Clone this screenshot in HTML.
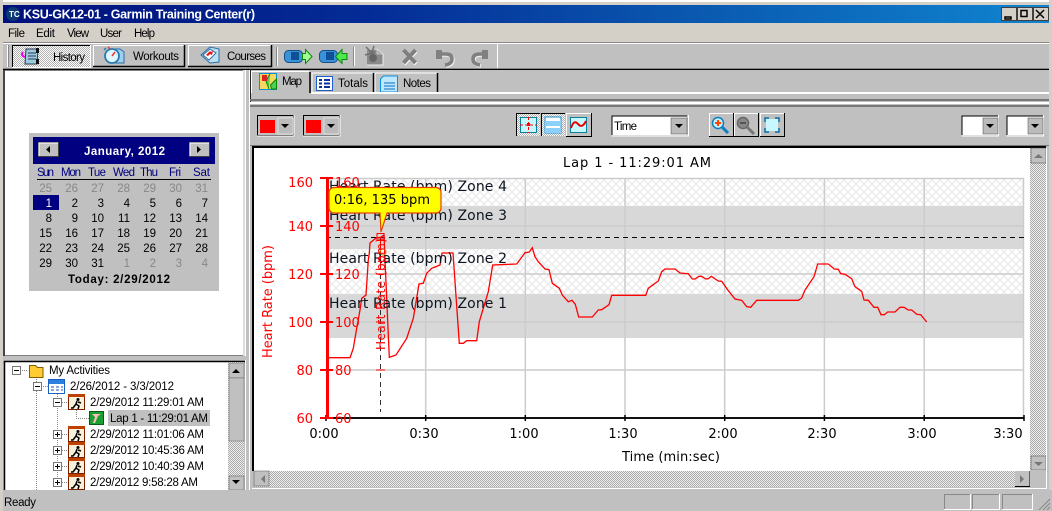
<!DOCTYPE html>
<html><head><meta charset="utf-8"><style>
html,body{margin:0;padding:0;background:#c0c0c0;width:1052px;height:511px;overflow:hidden}
svg{display:block}
text{font-family:"Liberation Sans",sans-serif;font-size:11.5px;fill:#000}
.g{fill:#888}.n{fill:#000080}
.c{font-family:"DejaVu Sans","Liberation Sans",sans-serif;font-size:13px}
.z{font-family:"DejaVu Sans","Liberation Sans",sans-serif;font-size:14px;fill:#0c1420}
.r{font-family:"DejaVu Sans","Liberation Sans",sans-serif;font-size:13px;fill:#f00}
</style></head><body>
<svg width="1052" height="511" viewBox="0 0 1052 511" xmlns="http://www.w3.org/2000/svg">
<defs>
<linearGradient id="t"><stop offset="0" stop-color="#00107c"/><stop offset=".35" stop-color="#042c96"/><stop offset=".67" stop-color="#0a5ab0"/><stop offset="1" stop-color="#1084d0"/></linearGradient>
<pattern id="h" width="8" height="8" patternUnits="userSpaceOnUse"><rect width="8" height="8" fill="#fff"/><path d="M0 0L8 8M8 0L0 8" stroke="#e8e8e8" stroke-width="1"/></pattern>
<pattern id="d" width="2" height="2" patternUnits="userSpaceOnUse"><rect width="2" height="2" fill="#fff"/><rect width="1" height="1" fill="#b0b0b0"/><rect x="1" y="1" width="1" height="1" fill="#b0b0b0"/></pattern>
<pattern id="k" width="2" height="2" patternUnits="userSpaceOnUse"><rect width="2" height="2" fill="#eee"/><rect width="1" height="1" fill="#aaa"/><rect x="1" y="1" width="1" height="1" fill="#aaa"/></pattern>
</defs>
<rect width="1052" height="511" fill="#c0c0c0"/>
<rect width="1052" height="2" fill="#fff"/>
<rect y="2" width="1052" height="3" fill="#d4d0c8"/>
<rect x="0" width="3" height="511" fill="#d4d0c8"/><rect x="1049" width="3" height="511" fill="#d4d0c8"/>
<rect x="3" y="5" width="1046" height="18" fill="url(#t)"/>
<circle cx="13" cy="14" r="7" fill="#0b3a74"/><text x="9" y="17" style="font-size:8px;font-weight:bold;fill:#fff">TC</text>
<text x="23" y="18.500" textLength="232" style="font-size:12.5px;font-weight:bold;fill:#fff">KSU-GK12-01 - Garmin Training Center(r)</text>
<g fill="#d4d0c8" stroke="#404040"><rect x="1001.500" y="7.500" width="15" height="13"/><rect x="1017.500" y="7.500" width="15" height="13"/><rect x="1033.500" y="7.500" width="15" height="13"/></g>
<path d="M1005 17h6v2h-6zM1021 10.500h6v6h-6zM1036 10l8 8M1044 10l-8 8" fill="none" stroke="#000" stroke-width="1.500"/>
<rect x="3" y="23" width="1046" height="19" fill="#d4d0c8"/>
<text x="8" y="37" textLength="17">File</text><text x="36" y="37" textLength="19">Edit</text><text x="67" y="37" textLength="22">View</text><text x="100" y="37" textLength="22">User</text><text x="134" y="37" textLength="21">Help</text>
<rect x="3" y="42" width="1046" height="1" fill="#888"/><rect x="3" y="43" width="1046" height="1" fill="#fff"/>
<rect x="7" y="45" width="1" height="22" fill="#fff"/><rect x="8" y="45" width="1" height="22" fill="#888"/>
<rect x="12" y="45" width="78" height="22" fill="url(#d)"/><path d="M12.500 67V45.500H90" fill="none" stroke="#000"/><path d="M90.500 45V67.500H12" fill="none" stroke="#fff"/>
<path d="M23 52q-3 4 3 5" fill="none" stroke="#e0e" stroke-width="2"/><path d="M26 49h12l-1 15H25z" fill="#9cd" stroke="#335"/><path d="M28 53h8M28 56h8M28 59h8" stroke="#335"/><path d="M36 48h3v5h-3zM36 59h3v5h-3z" fill="#111"/>
<text x="53" y="61" textLength="32">History</text>
<g fill="#c0c0c0"><rect x="93" y="45" width="91" height="22"/><rect x="188" y="45" width="83" height="22"/></g>
<path d="M93.500 67V45.500H184M188.500 67V45.500H271" fill="none" stroke="#fff"/><path d="M184.500 45V66.500H93M271.500 45V66.500H188" fill="none" stroke="#000" stroke-width="1.500"/>
<path d="M110 49h10l4 3v11h-14z" fill="#9fd0f0" stroke="#2a6ea8"/><circle cx="112" cy="56" r="7" fill="#dff6ff" stroke="#2a7ab0" stroke-width="1.800"/><path d="M108 47l2 2M112 56l3-4" stroke="#e33" stroke-width="1.500"/><path d="M106 48l-2 2" stroke="#2a7ab0" stroke-width="1.500"/>
<text x="133" y="60" textLength="46">Workouts</text>
<path d="M201 55l9-8 9 2v13l-9 1z" fill="#bfe0f4" stroke="#2a6ea8"/><path d="M203 55l7-6 6 4-7 7z" fill="#fff" stroke="#2a6ea8"/><path d="M206 55l4-4 1 1 2-1-1 4-2-1-2 2z" fill="#e11"/>
<text x="227" y="60" textLength="39">Courses</text>
<rect x="276" y="47" width="1" height="19" fill="#888"/><rect x="277" y="47" width="1" height="19" fill="#fff"/>
<rect x="284.500" y="50.500" width="18" height="12" rx="4" fill="#3a92d8" stroke="#134f86"/><rect x="291" y="52" width="8" height="8" fill="#0e4f96"/><path d="M302.500 53.500h3v-4l6.500 7-6.500 7v-4h-3z" fill="#a0ff90" stroke="#0a8a0a"/>
<rect x="319.500" y="50.500" width="18" height="12" rx="4" fill="#3a92d8" stroke="#134f86"/><rect x="326" y="52" width="8" height="8" fill="#0e4f96"/><path d="M347 53.500h-5v-4l-6.500 7 6.500 7v-4h5z" fill="#50e850" stroke="#0a8a0a"/>
<rect x="353" y="47" width="1" height="19" fill="#888"/><rect x="354" y="47" width="1" height="19" fill="#fff"/>
<path d="M367 50h10l6 4v11h-16z" fill="#8a8a8a"/><path d="M377 49l6 5h-6z" fill="#aaa" stroke="#eee" stroke-width=".6"/><path d="M366 47l8 8M374 46l-3 9M365 55l10-3" stroke="#707070" stroke-width="1.500"/><circle cx="373" cy="58" r="4" fill="#666"/><path d="M367 65h16V54" fill="none" stroke="#eee"/>
<path d="M404 51l12 13M416 51l-12 13" stroke="#fff" stroke-width="4"/><path d="M403.500 50l12 13M415.500 50l-12 13" stroke="#808080" stroke-width="4"/>
<g fill="none"><path d="M438 55h9q6 0 6 5t-7 6" stroke="#eee" stroke-width="3.500"/><path d="M437 54h9q6 0 6 5t-7 6" stroke="#808080" stroke-width="3.500"/><path d="M488 55h-7q-7 0-7 5t7 6" stroke="#eee" stroke-width="3.500"/><path d="M487 54h-7q-7 0-7 5t7 6" stroke="#808080" stroke-width="3.500"/></g>
<path d="M436 50h6v9h-6zM482 50h6v9h-6z" fill="#808080"/>
<rect x="497" y="44" width="1" height="24" fill="#fff"/>
<rect x="3" y="68" width="1046" height="1" fill="#888"/><rect x="3" y="69" width="1046" height="1" fill="#000"/>

<!-- left calendar pane -->
<rect x="4" y="70" width="241" height="286" fill="#fff" stroke="#000"/>
<rect x="3" y="70" width="2" height="286" fill="#444"/>
<rect x="243" y="70" width="2" height="286" fill="#ddd"/>
<rect x="245" y="70" width="1" height="420" fill="#fff"/><rect x="246" y="70" width="3" height="420" fill="#c0c0c0"/><rect x="249" y="70" width="1" height="420" fill="#fff"/>
<rect x="29" y="133" width="190" height="158" fill="#c0c0c0"/>
<rect x="33" y="137" width="182" height="27" fill="#000080"/>
<g fill="#c0c0c0" stroke="#404040"><rect x="38.500" y="142.500" width="20" height="14"/><rect x="189.500" y="142.500" width="20" height="14"/></g>
<path d="M39 156V143h19M190 156V143h19" fill="none" stroke="#fff"/>
<path d="M50 146v7l-4-3.500zM197 146v7l4-3.500z" fill="#000"/>
<text x="84" y="155" textLength="81" style="font-weight:bold;fill:#fff">January, 2012</text>
<g class="n"><text class="n" x="37" y="176" textLength="17">Sun</text><text class="n" x="61" y="176" textLength="20">Mon</text><text class="n" x="88" y="176" textLength="18">Tue</text><text class="n" x="113" y="176" textLength="22">Wed</text><text class="n" x="140" y="176" textLength="18">Thu</text><text class="n" x="169" y="176" textLength="12">Fri</text><text class="n" x="193" y="176" textLength="17">Sat</text></g>
<rect x="37" y="179" width="174" height="1" fill="#000"/>
<rect x="33" y="195" width="26" height="15" fill="#000080"/>
<g text-anchor="end">
<g><text class="g" x="52" y="192">25</text><text class="g" x="78" y="192">26</text><text class="g" x="104" y="192">27</text><text class="g" x="130" y="192">28</text><text class="g" x="156" y="192">29</text><text class="g" x="182" y="192">30</text><text class="g" x="208" y="192">31</text></g>
<g><text x="52" y="207" style="fill:#fff">1</text><text x="78" y="207">2</text><text x="104" y="207">3</text><text x="130" y="207">4</text><text x="156" y="207">5</text><text x="182" y="207">6</text><text x="208" y="207">7</text></g>
<g><text x="52" y="222">8</text><text x="78" y="222">9</text><text x="104" y="222">10</text><text x="130" y="222">11</text><text x="156" y="222">12</text><text x="182" y="222">13</text><text x="208" y="222">14</text></g>
<g><text x="52" y="237">15</text><text x="78" y="237">16</text><text x="104" y="237">17</text><text x="130" y="237">18</text><text x="156" y="237">19</text><text x="182" y="237">20</text><text x="208" y="237">21</text></g>
<g><text x="52" y="252">22</text><text x="78" y="252">23</text><text x="104" y="252">24</text><text x="130" y="252">25</text><text x="156" y="252">26</text><text x="182" y="252">27</text><text x="208" y="252">28</text></g>
<g><text x="52" y="267">29</text><text x="78" y="267">30</text><text x="104" y="267">31</text><text class="g" x="130" y="267">1</text><text class="g" x="156" y="267">2</text><text class="g" x="182" y="267">3</text><text class="g" x="208" y="267">4</text></g>
</g>
<text x="68" y="283" textLength="102" style="font-weight:bold">Today: 2/29/2012</text>

<!-- tree -->
<rect x="3" y="356" width="243" height="4" fill="#c0c0c0"/>
<rect x="4" y="361" width="225" height="129" fill="#fff"/>
<path d="M4.500 490V361.500H245" fill="none" stroke="#000" stroke-width="1.500"/>
<rect x="228" y="362" width="16" height="128" fill="url(#k)"/>
<rect x="229" y="363" width="15" height="15" fill="#c0c0c0" stroke="#555" stroke-width=".5"/>
<rect x="229" y="378" width="15" height="63" fill="#c0c0c0" stroke="#666" stroke-width=".5"/>
<rect x="229" y="476" width="15" height="14" fill="#c0c0c0" stroke="#555" stroke-width=".5"/>
<path d="M232 373h8l-4-4zM232 480h8l-4 4z" fill="#000"/>
<path d="M36.500 375v115M57.500 392v90M20 370.500h8M41 386.500h8M62 402.500h6M62 434.500h6M62 450.500h6M62 466.500h6M62 482.500h6M76.500 408v10.500h13" fill="none" stroke="#888" stroke-dasharray="1 1"/>
<g fill="#fff" stroke="#777"><rect x="12.500" y="366.500" width="8" height="8"/><rect x="33.500" y="382.500" width="8" height="8"/><rect x="53.500" y="398.500" width="8" height="8"/><rect x="53.500" y="430.500" width="8" height="8"/><rect x="53.500" y="446.500" width="8" height="8"/><rect x="53.500" y="462.500" width="8" height="8"/><rect x="53.500" y="478.500" width="8" height="8"/></g>
<path d="M14 370.500h5M35 386.500h5M55 402.500h5M55 434.500h5M57.500 432v5M55 450.500h5M57.500 448v5M55 466.500h5M57.500 464v5M55 482.500h5M57.500 480v5" stroke="#000" fill="none"/>
<path d="M29.500 365.500h6l2 2h5.500v10h-13.500z" fill="#fc3" stroke="#8a5a00"/>
<rect x="48.500" y="379.500" width="16" height="14" fill="#fff" stroke="#1a60c0"/><rect x="49" y="380" width="15" height="4" fill="#2a80e0"/><path d="M51 387h3M56 387h3M61 387h2M51 390h3M56 390h3M61 390h2" stroke="#1a50b0"/>
<g id="run"><rect x="68.500" y="394.500" width="16" height="15" fill="#f8f0d8" stroke="#7a2000"/><rect x="68" y="394" width="17" height="3" fill="#c04000"/><circle cx="78" cy="399.500" r="1.500" fill="#000"/><path d="M77 401l-1 3 3 2-1 3M76 404l-3 4h-2M78 402l3 1" fill="none" stroke="#000" stroke-width="1.500"/></g>
<use href="#run" y="32"/><use href="#run" y="48"/><use href="#run" y="64"/><use href="#run" y="80"/>
<rect x="89.500" y="411.500" width="14" height="13" fill="#1aa030" stroke="#0a5a14"/><path d="M92 414h9l-3 2-3 7h-2l2-6z" fill="#fbb"/>
<rect x="108" y="410" width="102" height="16" fill="#c0c0c0"/>
<text x="49" y="374" textLength="61">My Activities</text>
<text x="70" y="390" textLength="104">2/26/2012 - 3/3/2012</text>
<text x="90" y="406" textLength="114">2/29/2012 11:29:01 AM</text>
<text x="110" y="422" textLength="98">Lap 1 - 11:29:01 AM</text>
<text x="90" y="438" textLength="114">2/29/2012 11:01:06 AM</text>
<text x="90" y="454" textLength="114">2/29/2012 10:45:36 AM</text>
<text x="90" y="470" textLength="114">2/29/2012 10:40:39 AM</text>
<text x="90" y="486" textLength="108">2/29/2012 9:58:28 AM</text>

<!-- tabs -->
<rect x="250" y="70" width="799" height="23" fill="#c0c0c0"/>
<rect x="250" y="69" width="1" height="33" fill="#222"/>
<path d="M251.500 93V71.500H309" fill="none" stroke="#fff"/><path d="M310 72V93" stroke="#000" stroke-width="1.500"/>
<path d="M312 92V73H373M375 92V73H437" fill="none" stroke="#fff"/><path d="M373.500 73V92M437.500 73V92" stroke="#000" stroke-width="1.500"/>
<rect x="259.500" y="73.500" width="17" height="16" fill="#f4d860" stroke="#0a90d0"/><path d="M270 74l-4 7 3 8M276.500 79l-6 6 1 4h5z" fill="#5c5" stroke="#080"/><rect x="262" y="75" width="5" height="6" fill="#d22"/>
<text x="282" y="85" textLength="20">Map</text>
<rect x="316.500" y="76.500" width="16" height="14" fill="#fff" stroke="#1a60d0"/><path d="M319 80h3M324 80h6M319 83.500h3M324 83.500h6M319 87h3M324 87h6" stroke="#0a30a0" stroke-width="2"/>
<text x="338" y="87" textLength="30">Totals</text>
<path d="M380.500 79l3-3h14v16h-17z" fill="#bfe8ff" stroke="#0a90e0"/><path d="M384 83h11M384 86h11M384 89h11" stroke="#0a70c0"/>
<text x="403" y="87" textLength="28">Notes</text>
<rect x="311" y="92" width="738" height="2" fill="#fff"/>
<rect x="250" y="99" width="799" height="2" fill="#777"/>
<rect x="250" y="102" width="799" height="2" fill="#fff"/>
<rect x="250" y="105" width="799" height="2" fill="#777"/>

<!-- chart toolbar -->
<g><rect x="257.500" y="115.500" width="36" height="20" fill="#c0c0c0" stroke="#000"/><path d="M294 115v21H257" stroke="#fff" fill="none"/><rect x="260" y="120" width="15" height="13" fill="#f00"/><rect x="278" y="118" width="15" height="16" fill="#bbb" stroke="#fff" stroke-width=".5"/><path d="M281 124h8l-4 4z" fill="#000"/></g>
<g transform="translate(46 0)"><rect x="257.500" y="115.500" width="36" height="20" fill="#c0c0c0" stroke="#000"/><path d="M294 115v21H257" stroke="#fff" fill="none"/><rect x="260" y="120" width="15" height="13" fill="#f00"/><rect x="278" y="118" width="15" height="16" fill="#bbb" stroke="#fff" stroke-width=".5"/><path d="M281 124h8l-4 4z" fill="#000"/></g>
<rect x="516" y="113" width="24" height="23" fill="url(#d)"/><rect x="541" y="113" width="24" height="23" fill="url(#d)"/>
<path d="M516.500 136V113.500H540M541.500 136V113.500H565" fill="none" stroke="#000"/>
<rect x="520.500" y="117.500" width="16" height="15" fill="#c8f8ff" stroke="#0a80a0"/><path d="M520 125h17M528.500 117v16" stroke="#f00" stroke-dasharray="3 2"/><rect x="527" y="123" width="3" height="3" fill="#f00"/>
<rect x="545" y="117" width="16" height="16" fill="#fff" stroke="#1a90d0"/><rect x="545" y="121" width="16" height="5" fill="#8ad0f8"/><rect x="545" y="128" width="16" height="5" fill="#8ad0f8"/>
<path d="M566.500 136V113.500H591" fill="none" stroke="#fff"/><path d="M591.500 113v23.500H566" fill="none" stroke="#000"/>
<rect x="570.500" y="117.500" width="16" height="15" fill="#c8f8ff" stroke="#0a80a0"/><path d="M571 128q3-9 7-4t8-3" fill="none" stroke="#e00" stroke-width="2"/>
<rect x="612" y="116" width="75" height="19" fill="#fff"/><path d="M612 135V116h75" stroke="#000" fill="none"/><path d="M611.500 136h77V115" stroke="#fff" fill="none"/>
<text x="614" y="130" textLength="23">Time</text>
<rect x="671" y="118" width="16" height="16" fill="#bbb" stroke="#444" stroke-width=".5"/><path d="M675 124h8l-4 4z" fill="#000"/>
<g fill="#c0c0c0"><rect x="709" y="113" width="24" height="24"/><rect x="734" y="113" width="24" height="24"/><rect x="760" y="113" width="24" height="24"/></g>
<path d="M709.500 137V113.500H733M734.500 137V113.500H758M760.500 137V113.500H784" fill="none" stroke="#fff"/>
<path d="M733.500 113v23.500H709M758.500 113v23.500H734M784.500 113v23.500H760" fill="none" stroke="#000"/>
<circle cx="718" cy="123" r="5.500" fill="#c8f0ff" stroke="#0a80c0" stroke-width="1.500"/><path d="M715 123h6M718 120v6" stroke="#f40" stroke-width="2"/><path d="M722 127l6 6" stroke="#0a80c0" stroke-width="3"/>
<circle cx="743" cy="123" r="5.500" fill="#888" stroke="#666" stroke-width="1.500"/><path d="M740 123h6" stroke="#555" stroke-width="2"/><path d="M747 127l7 7" stroke="#777" stroke-width="3"/>
<rect x="766" y="119" width="12" height="12" fill="#c8f8ff"/><path d="M765 122v-4h4M775 118h4v4M779 128v4h-4M769 132h-4v-4" fill="none" stroke="#0a70b0" stroke-width="1.500"/>
<g><rect x="962" y="116" width="36" height="19" fill="#fff"/><path d="M962 135V116h36" stroke="#000" fill="none"/><path d="M961.500 136h37V115" stroke="#fff" fill="none"/><rect x="983" y="118" width="15" height="16" fill="#bbb" stroke="#444" stroke-width=".5"/><path d="M986 124h8l-4 4z" fill="#000"/></g>
<g transform="translate(45 0)"><rect x="962" y="116" width="36" height="19" fill="#fff"/><path d="M962 135V116h36" stroke="#000" fill="none"/><path d="M961.500 136h37V115" stroke="#fff" fill="none"/><rect x="983" y="118" width="15" height="16" fill="#bbb" stroke="#444" stroke-width=".5"/><path d="M986 124h8l-4 4z" fill="#000"/></g>
<rect x="250" y="145" width="799" height="1" fill="#777"/>

<!-- chart frame -->
<rect x="253" y="147" width="777" height="324" fill="#fff"/>
<rect x="252" y="146" width="794" height="2" fill="#000"/><rect x="252" y="146" width="2" height="325" fill="#000"/>
<rect x="1030" y="148" width="16" height="322" fill="url(#k)"/>
<rect x="1031" y="148" width="15" height="15" fill="#c0c0c0" stroke="#444" stroke-width=".5"/><path d="M1034 158h9l-4.500-4z" fill="#777"/>
<rect x="1031" y="456" width="15" height="14" fill="#c0c0c0" stroke="#444" stroke-width=".5"/><path d="M1034 462h9l-4.500 4z" fill="#777"/>
<rect x="254" y="471" width="776" height="16" fill="url(#k)"/>
<rect x="254" y="471" width="15" height="15" fill="#c0c0c0" stroke="#555" stroke-width=".5"/><path d="M265 475v8l-4-4z" fill="#777"/>
<rect x="1015" y="471" width="15" height="15" fill="#c0c0c0"/><path d="M1015 486.500h15V471" stroke="#000" fill="none"/><path d="M1020 475v8l4-4z" fill="#777"/>
<rect x="1030" y="470" width="16" height="17" fill="#c0c0c0"/>
<path d="M252 488.500h794.500V148" stroke="#fff" fill="none"/>
<rect x="250" y="489" width="799" height="1" fill="#c0c0c0"/>

<!-- plot -->
<text class="c" x="563" y="167" textLength="148">Lap 1 - 11:29:01 AM</text>
<rect x="326" y="178" width="698" height="28" fill="url(#h)"/>
<rect x="326" y="206" width="698" height="43" fill="#d8d8d8"/>
<rect x="326" y="249" width="698" height="45" fill="url(#h)"/>
<rect x="326" y="294" width="698" height="44" fill="#d8d8d8"/>
<g stroke="#ccc" stroke-width="1.500"><path d="M326 178.500H1024M326 226H1024M326 274H1024M326 322H1024M326 370H1024"/><path d="M425.700 178V418M525.300 178V418M625 178V418M724.700 178V418M824.400 178V418M924.200 178V418M1023.500 178V418" fill="none"/></g>
<path d="M326 237.500H1024" stroke="#000" stroke-dasharray="5 4"/>
<path d="M380.500 238V412" stroke="#333" stroke-dasharray="5 4"/>
<path d="M326 418H1024" stroke="#111" stroke-width="2"/>
<path d="M326 415v6M425.700 415v6M525.300 415v6M625 415v6M724.700 415v6M824.400 415v6M924.200 415v6M1024 415v6" stroke="#000" stroke-width="1.500"/>
<polyline fill="none" stroke="#f00" stroke-width="1.300" points="327,357.700 350,357.700 353.300,348.300 356.700,328.300 360,310 361.700,298.300 366,295 368.300,260 369.300,253 370,243 376,238 380.700,237.300 384,235 385,260 389.300,357.300 396,355 406.700,338.300 413.300,318.300 419,284 423.300,283.300 426.700,273.300 431.700,268.300 440,265 442,253 453,253 459.300,343.300 463.300,343.300 466.700,340.700 476.700,340.700 479.300,321.700 488.300,291.700 492.700,265 516.700,264 525,252.700 529.300,252 532.300,247.700 535,256.700 538.300,261.700 545,269 549,269.700 552.300,283.300 559.300,288.300 562.300,295 568.300,301.700 572,300.300 575.300,304.300 578.700,317 592.300,317 598.300,310 601.700,309.700 609,304.700 611.700,295.300 645.700,295.300 648.300,288.300 658.300,281 661.700,271.700 665,269 675,269 680,273 688.300,273.700 692.300,279 695,279 699,276.300 701.700,276.300 705.700,279 708.300,278.700 711.300,276.300 718.300,281 721.700,281.300 728.300,290.700 735,299 741.700,300.300 746.700,306.700 750.700,307.300 756.700,300.300 798.300,300.300 801.700,298 805,290 814,276.700 817.700,264 828.300,264 834.300,269 838.300,269.300 840.700,273.700 845,274.300 851.700,278.700 855,286.700 861.700,291.300 864,300 868.300,300.300 874,307.300 877.700,307.300 881,314.700 884.300,314.700 887.700,312 895,312 900,307.300 904,307.300 908.300,310 911.700,310 916.700,314.300 920.700,314.700 926.700,322"/>
<rect x="326" y="177" width="3" height="242" fill="#f00"/>
<path d="M320 178h13M320 226h13M320 274h13M320 322h13M320 370h13M320 418h13" stroke="#f00" stroke-width="2"/>
<path d="M376 238h9M376 274h9M376 322h9M376 370h9M380.500 240v30" stroke="#f00"/>
<rect x="377" y="233.500" width="7" height="7" fill="none" stroke="#f00"/>
<circle cx="383" cy="252" r="3" fill="none" stroke="#c80"/>
<text class="z" x="329" y="191" textLength="178">Heart Rate (bpm) Zone 4</text>
<text class="z" x="329" y="220" textLength="178">Heart Rate (bpm) Zone 3</text>
<text class="z" x="329" y="263" textLength="178">Heart Rate (bpm) Zone 2</text>
<text class="z" x="329" y="308" textLength="178">Heart Rate (bpm) Zone 1</text>
<g text-anchor="end">
<text class="r" x="313" y="187">160</text><text class="r" x="313" y="231">140</text><text class="r" x="313" y="279">120</text><text class="r" x="313" y="327">100</text><text class="r" x="313" y="375">80</text><text class="r" x="313" y="423">60</text></g>
<text class="r" x="335" y="187">160</text><text class="r" x="335" y="231">140</text><text class="r" x="335" y="279">120</text><text class="r" x="335" y="327">100</text><text class="r" x="335" y="375">80</text><text class="r" x="335" y="423">60</text>
<text class="r" transform="translate(272 358) rotate(-90)" textLength="113" x="0" y="0">Heart Rate (bpm)</text>
<text class="r" transform="translate(385 350) rotate(-90)" textLength="112" x="0" y="0" style="font-size:12px">Heart Rate (bpm)</text>
<path d="M334 187.500a5 5 0 0 0-5 5v15.500a5 5 0 0 0 5 5h46l1 19 6-19h49a5 5 0 0 0 5-5v-15.500a5 5 0 0 0-5-5z" fill="#ff0" stroke="#e84000" stroke-width="1.200"/>
<text class="c" x="334" y="204" textLength="96">0:16, 135 bpm</text>
<g class="c" text-anchor="middle"><text class="c" x="324" y="438">0:00</text><text class="c" x="424" y="438">0:30</text><text class="c" x="524" y="438">1:00</text><text class="c" x="623" y="438">1:30</text><text class="c" x="723" y="438">2:00</text><text class="c" x="822" y="438">2:30</text><text class="c" x="922" y="438">3:00</text><text class="c" x="1008" y="438">3:30</text></g>
<text class="c" x="622" y="461" textLength="98">Time (min:sec)</text>

<!-- status -->
<rect x="0" y="490" width="1052" height="21" fill="#c0c0c0"/>
<rect x="0" y="490" width="3" height="21" fill="#d4d0c8"/>
<text x="4" y="506" textLength="32">Ready</text>
<g fill="none"><path d="M944.500 509V494.500H970M972.500 509V494.500H999M1002.500 509V494.500H1032" stroke="#888"/><path d="M970.500 494V509.500H944M999.500 494V509.500H972M1032.500 494V509.500H1002" stroke="#fff"/></g>
<path d="M1039 510l11-11M1043 510l7-7M1047 510l3-3" stroke="#888" fill="none"/>
</svg>
</body></html>
